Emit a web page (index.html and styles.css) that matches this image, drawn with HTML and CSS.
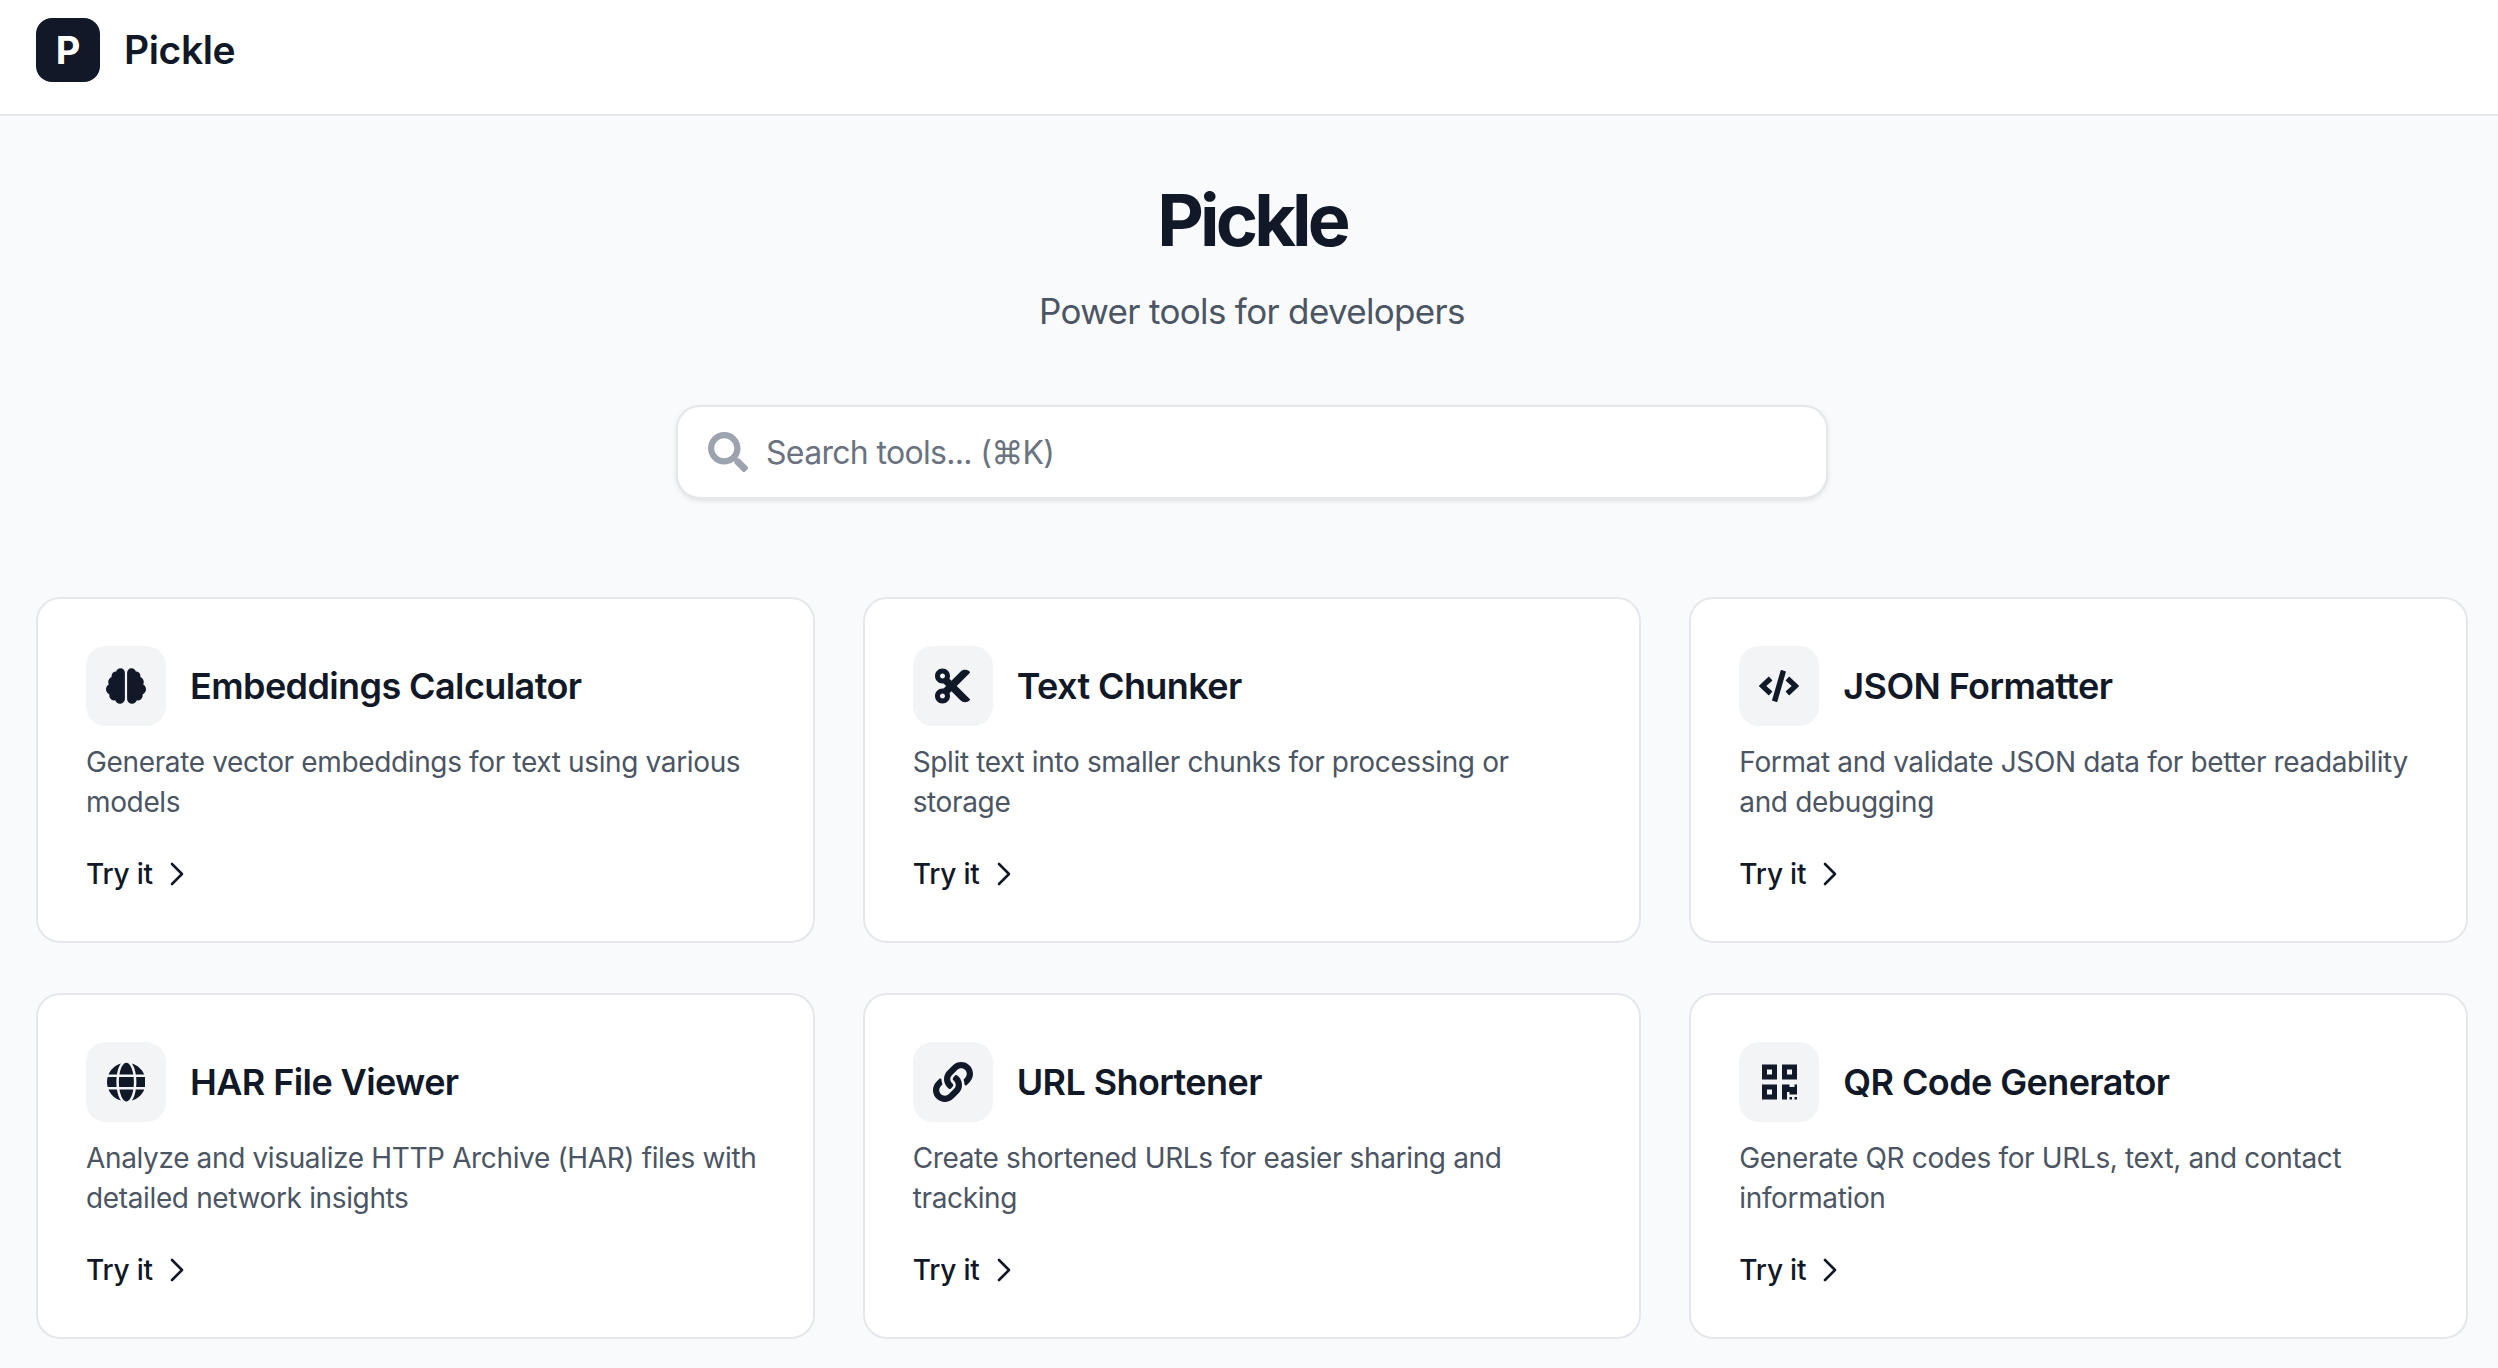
FILE: index.html
```html
<!DOCTYPE html>
<html lang="en">
<head>
<meta charset="utf-8">
<title>Pickle</title>
<link rel="stylesheet" href="styles.css">
</head>
<body>
<header class="topbar">
  <div class="logo">P</div>
  <div class="brand">Pickle</div>
</header>
<main class="main">
  <section class="hero">
    <h1 class="hero-title">Pickle</h1>
    <p class="hero-sub">Power tools for developers</p>
    <div class="search">
      <svg class="search-icon" viewBox="0 0 512 512"><path d="M505 442.7L405.3 343c-4.5-4.5-10.6-7-17-7H372c27.6-35.3 44-79.7 44-128C416 93.1 322.9 0 208 0S0 93.1 0 208s93.1 208 208 208c48.3 0 92.7-16.4 128-44v16.3c0 6.4 2.5 12.5 7 17l99.7 99.7c9.4 9.4 24.6 9.4 33.9 0l28.3-28.3c9.4-9.4 9.4-24.6.1-34zM208 336c-70.7 0-128-57.2-128-128 0-70.7 57.2-128 128-128 70.7 0 128 57.2 128 128 0 70.7-57.2 128-128 128z"/></svg>
      <span class="search-text">Search tools... (⌘K)</span>
    </div>
  </section>
  <section class="grid">
    <article class="card">
      <div class="card-head">
        <div class="card-icon"><svg class="ico ico-brain" viewBox="0 0 576 512"><path d="M208 0c-29.9 0-54.7 20.5-61.8 48.2-.8 0-1.4-.2-2.2-.2-35.3 0-64 28.7-64 64 0 4.8.6 9.5 1.7 14C52.5 138 32 166.6 32 200c0 12.6 3.2 24.3 8.3 34.9C16.3 248.7 0 274.3 0 304c0 33.3 20.4 61.9 49.4 73.9-.9 4.6-1.4 9.3-1.4 14.1 0 39.8 32.2 72 72 72 4.1 0 8.1-.5 12-1.2 9.6 28.5 36.2 49.2 68 49.2 39.8 0 72-32.2 72-72V64c0-35.3-28.7-64-64-64zm368 304c0-29.7-16.3-55.3-40.3-69.1 5.2-10.6 8.3-22.3 8.3-34.9 0-33.4-20.5-62-49.7-74 1-4.5 1.7-9.2 1.7-14 0-35.3-28.7-64-64-64-.8 0-1.5.2-2.2.2C422.7 20.5 397.9 0 368 0c-35.3 0-64 28.6-64 64v376c0 39.8 32.2 72 72 72 31.8 0 58.4-20.7 68-49.2 3.9.7 7.9 1.2 12 1.2 39.8 0 72-32.2 72-72 0-4.8-.5-9.5-1.4-14.1 29-12 49.4-40.6 49.4-73.9z"/></svg></div>
        <h2 class="card-title">Embeddings Calculator</h2>
      </div>
      <p class="card-desc">Generate vector embeddings for text using various models</p>
      <a class="try">Try it <svg class="chev" viewBox="0 0 14 24"><path d="M2 2l10 10-10 10"/></svg></a>
    </article>
    <article class="card">
      <div class="card-head">
        <div class="card-icon"><svg class="ico" viewBox="0 0 448 512"><path d="M278.06 256L444.48 89.57c4.69-4.69 4.69-12.29 0-16.97-32.8-32.8-85.99-32.8-118.79 0L210.18 188.12l-24.86-24.86c4.31-10.92 6.68-22.81 6.68-35.26 0-53.02-42.98-96-96-96S0 74.98 0 128s42.98 96 96 96c4.54 0 8.99-.32 13.36-.93L142.29 256l-32.93 32.93c-4.37-.61-8.83-.93-13.36-.93-53.02 0-96 42.98-96 96s42.98 96 96 96 96-42.98 96-96c0-12.45-2.37-24.34-6.68-35.26l24.86-24.86L325.69 439.4c32.8 32.8 85.99 32.8 118.79 0 4.69-4.68 4.69-12.28 0-16.97L278.06 256zM96 160c-17.64 0-32-14.36-32-32s14.36-32 32-32 32 14.36 32 32-14.36 32-32 32zm0 256c-17.64 0-32-14.36-32-32s14.36-32 32-32 32 14.36 32 32-14.36 32-32 32z"/></svg></div>
        <h2 class="card-title">Text Chunker</h2>
      </div>
      <p class="card-desc">Split text into smaller chunks for processing or storage</p>
      <a class="try">Try it <svg class="chev" viewBox="0 0 14 24"><path d="M2 2l10 10-10 10"/></svg></a>
    </article>
    <article class="card">
      <div class="card-head">
        <div class="card-icon"><svg class="ico ico-code" viewBox="0 0 640 512"><path d="M278.9 511.5l-61-17.7c-6.4-1.8-10-8.5-8.2-14.9L346.2 8.7c1.8-6.4 8.5-10 14.9-8.2l61 17.7c6.4 1.8 10 8.5 8.2 14.9L293.8 503.3c-1.9 6.4-8.5 10.1-14.9 8.2zm-114-112.2l43.5-46.4c4.6-4.9 4.3-12.7-.8-17.2L117 256l90.6-79.7c5.1-4.5 5.5-12.3.8-17.2l-43.5-46.4c-4.5-4.8-12.1-5.1-17-.5L3.8 247.2c-5.1 4.7-5.1 12.8 0 17.5l144.1 135.1c4.9 4.6 12.5 4.4 17-.5zm327.2.6l144.1-135.1c5.1-4.7 5.1-12.8 0-17.5L492.1 112.1c-4.8-4.5-12.4-4.3-17 .5L431.6 159c-4.6 4.9-4.3 12.7.8 17.2L523 256l-90.6 79.7c-5.1 4.5-5.5 12.3-.8 17.2l43.5 46.4c4.5 4.9 12.1 5.1 17 .6z"/></svg></div>
        <h2 class="card-title">JSON Formatter</h2>
      </div>
      <p class="card-desc">Format and validate JSON data for better readability and debugging</p>
      <a class="try">Try it <svg class="chev" viewBox="0 0 14 24"><path d="M2 2l10 10-10 10"/></svg></a>
    </article>
    <article class="card">
      <div class="card-head">
        <div class="card-icon"><svg class="ico" viewBox="0 0 496 512"><path d="M336.5 160C322 70.7 287.8 8 248 8s-74 62.7-88.5 152h177zM152 256c0 22.2 1.2 43.5 3.3 64h185.3c2.1-20.5 3.3-41.8 3.3-64s-1.2-43.5-3.3-64H155.3c-2.1 20.5-3.3 41.8-3.3 64zm324.7-96c-28.6-67.9-86.5-120.4-158-141.6 24.4 33.8 41.2 84.7 50 141.6h108zM177.2 18.4C105.8 39.6 47.8 92.1 19.3 160h108c8.7-56.9 25.5-107.8 49.9-141.6zM487.4 192H372.7c2.1 21 3.3 42.5 3.3 64s-1.2 43-3.3 64h114.6c5.5-20.5 8.6-41.8 8.6-64s-3.1-43.5-8.5-64zM120 256c0-21.5 1.2-43 3.3-64H8.6C3.2 212.5 0 233.8 0 256s3.2 43.5 8.6 64h114.6c-2-21-3.2-42.5-3.2-64zm39.5 96c14.5 89.3 48.7 152 88.5 152s74-62.7 88.5-152h-177zm159.3 141.6c71.4-21.2 129.4-73.7 158-141.6h-108c-8.8 56.9-25.6 107.8-50 141.6zM19.3 352c28.6 67.9 86.5 120.4 158 141.6-24.4-33.8-41.2-84.7-50-141.6h-108z"/></svg></div>
        <h2 class="card-title">HAR File Viewer</h2>
      </div>
      <p class="card-desc">Analyze and visualize HTTP Archive (HAR) files with detailed network insights</p>
      <a class="try">Try it <svg class="chev" viewBox="0 0 14 24"><path d="M2 2l10 10-10 10"/></svg></a>
    </article>
    <article class="card">
      <div class="card-head">
        <div class="card-icon"><svg class="ico" viewBox="0 0 512 512"><path d="M326.612 185.391c59.747 59.809 58.927 155.698.36 214.59-.11.12-.24.25-.36.37l-67.2 67.2c-59.27 59.27-155.699 59.262-214.96 0-59.27-59.26-59.27-155.7 0-214.96l37.106-37.106c9.84-9.84 26.786-3.3 27.294 10.606.648 17.722 3.826 35.527 9.69 52.721 1.986 5.822.567 12.262-3.783 16.612l-13.087 13.087c-28.026 28.026-28.905 73.66-1.155 101.96 28.024 28.579 74.086 28.749 102.325.51l67.2-67.19c28.191-28.191 28.073-73.757 0-101.83-3.701-3.694-7.429-6.564-10.341-8.569a16.037 16.037 0 0 1-6.947-12.606c-.396-10.567 3.348-21.456 11.698-29.806l21.054-21.055c5.521-5.521 14.182-6.199 20.584-1.731a152.482 152.482 0 0 1 20.522 17.197zM467.547 44.449c-59.261-59.262-155.69-59.27-214.96 0l-67.2 67.2c-.12.12-.25.25-.36.37-58.566 58.892-59.387 154.781.36 214.59a152.454 152.454 0 0 0 20.521 17.196c6.402 4.468 15.064 3.789 20.584-1.731l21.054-21.055c8.35-8.35 12.094-19.239 11.698-29.806a16.037 16.037 0 0 0-6.947-12.606c-2.912-2.005-6.64-4.875-10.341-8.569-28.073-28.073-28.191-73.639 0-101.83l67.2-67.19c28.239-28.239 74.3-28.069 102.325.51 27.75 28.3 26.872 73.934-1.155 101.96l-13.087 13.087c-4.35 4.35-5.769 10.79-3.783 16.612 5.864 17.194 9.042 34.999 9.69 52.721.509 13.906 17.454 20.446 27.294 10.606l37.106-37.106c59.271-59.259 59.271-155.699.001-214.959z"/></svg></div>
        <h2 class="card-title">URL Shortener</h2>
      </div>
      <p class="card-desc">Create shortened URLs for easier sharing and tracking</p>
      <a class="try">Try it <svg class="chev" viewBox="0 0 14 24"><path d="M2 2l10 10-10 10"/></svg></a>
    </article>
    <article class="card">
      <div class="card-head">
        <div class="card-icon"><svg class="ico" viewBox="0 0 448 512"><path d="M0 224h192V32H0v192zM64 96h64v64H64V96zm192-64v192h192V32H256zm128 128h-64V96h64v64zM0 480h192V288H0v192zm64-128h64v64H64v-64zm352-64h32v128h-96v-32h-32v96h-64V288h96v32h64v-32zm0 160h32v32h-32v-32zm-64 0h32v32h-32v-32z"/></svg></div>
        <h2 class="card-title">QR Code Generator</h2>
      </div>
      <p class="card-desc">Generate QR codes for URLs, text, and contact information</p>
      <a class="try">Try it <svg class="chev" viewBox="0 0 14 24"><path d="M2 2l10 10-10 10"/></svg></a>
    </article>
  </section>
</main>
</body>
</html>
```
FILE: styles.css
```css
* { box-sizing: border-box; }
html, body { margin: 0; padding: 0; }
body {
  background: #f9fafb;
  color: #111827;
  font-family: Inter, "Liberation Sans", sans-serif;
  min-height: 1368px;
}
.topbar {
  background: #fff;
  border-bottom: 2px solid #e5e7eb;
  display: flex;
  align-items: center;
  gap: 24px;
  padding: 18px 36px 32px;
}
.logo {
  width: 64px;
  height: 64px;
  border-radius: 16px;
  background: #111827;
  color: #fff;
  font-size: 38px;
  font-weight: 700;
  display: flex;
  align-items: center;
  justify-content: center;
}
.brand {
  font-size: 39px;
  font-weight: 600;
  letter-spacing: -0.4px;
  padding-bottom: 2px;
}
.main { padding: 64px 30px 29px 36px; }
.hero {
  display: flex;
  flex-direction: column;
  align-items: center;
}
.hero-title {
  margin: 0;
  font-size: 72px;
  line-height: 80px;
  font-weight: 700;
  letter-spacing: -3.9px;
}
.hero-sub {
  margin: 27px 0 0;
  font-size: 35px;
  line-height: 48px;
  letter-spacing: -0.67px;
  color: #4b5563;
}
.search {
  margin-top: 70px;
  width: 1152px;
  height: 94px;
  background: #fff;
  border: 2px solid #e5e7eb;
  border-radius: 24px;
  box-shadow: 0 2px 5px rgba(0,0,0,.1);
  display: flex;
  align-items: center;
  gap: 18px;
  padding: 0 30px;
}
.search-icon { width: 40px; height: 40px; fill: #9ca3af; flex: none; }
.search-text { font-size: 32px; letter-spacing: -0.68px; color: #6b7280; }
.grid {
  margin-top: 98px;
  display: grid;
  grid-template-columns: repeat(3, 1fr);
  gap: 50px 48px;
}
.card {
  background: #fff;
  border: 2px solid #e5e7eb;
  border-radius: 24px;
  padding: 47px 48px 48px;
  height: 346px;
}
.card-head { display: flex; align-items: center; gap: 24px; }
.card-icon {
  width: 80px;
  height: 80px;
  border-radius: 20px;
  background: #f3f4f6;
  display: flex;
  align-items: center;
  justify-content: center;
  flex: none;
}
.ico { height: 40px; fill: #111827; display: block; }
.ico-brain { width: 40px; height: 36px; }
.ico-code { width: 40px; height: 32px; }
.card-title {
  margin: 0;
  font-size: 36px;
  line-height: 48px;
  font-weight: 600;
  letter-spacing: -0.6px;
}
.card-desc {
  margin: 16px 0 0;
  font-size: 28px;
  line-height: 40px;
  letter-spacing: -0.36px;
  color: #4b5563;
}
.try {
  margin-top: 32px;
  display: flex;
  align-items: center;
  gap: 17px;
  font-size: 28px;
  line-height: 40px;
  font-weight: 500;
  letter-spacing: -0.2px;
  color: #111827;
}
.chev { width: 14px; height: 24px; fill: none; stroke: #111827; stroke-width: 2.6; stroke-linecap: round; stroke-linejoin: round; }
```
